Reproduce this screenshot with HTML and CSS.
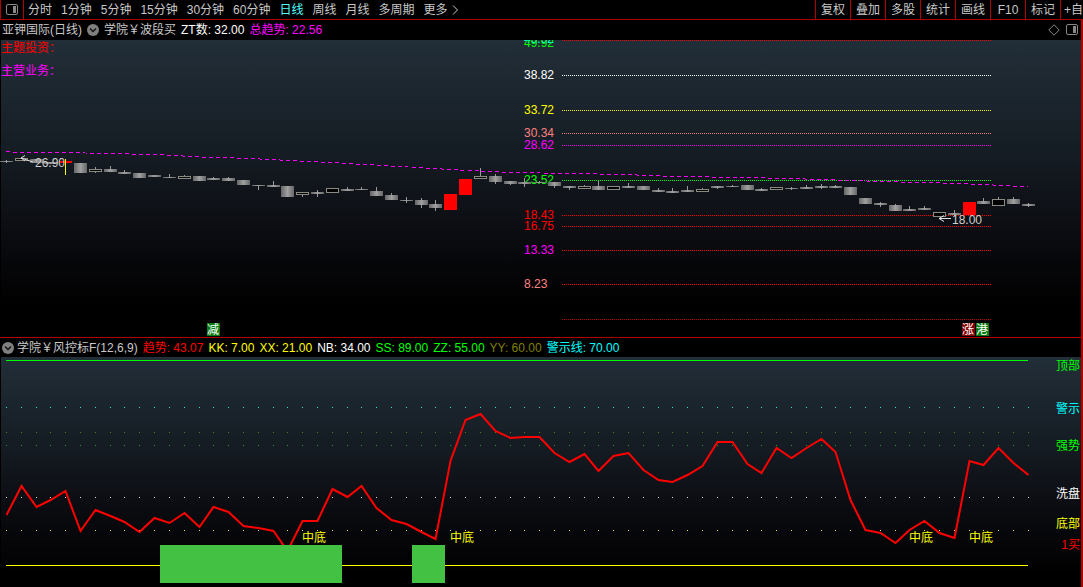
FILE: index.html
```html
<!DOCTYPE html>
<html lang="zh-CN">
<head>
    <meta charset="UTF-8">
    <meta name="viewport" content="width=device-width, initial-scale=1.0">
    <title>亚钾国际(日线)</title>
    <link rel="stylesheet" href="styles.css">
</head>
<body>
    <!-- Toolbar -->
    <header class="toolbar">
        <button class="layout-button" aria-label="布局">
            <svg width="12" height="12" viewBox="0 0 12 12"><rect x="0.5" y="0.5" width="11" height="10" rx="1.5" fill="none" stroke="#888"/><rect x="7" y="2" width="3" height="7" fill="#888"/></svg>
        </button>
        <nav class="periods">
            <button>分时</button>
            <button>1分钟</button>
            <button>5分钟</button>
            <button>15分钟</button>
            <button>30分钟</button>
            <button>60分钟</button>
            <button class="active">日线</button>
            <button>周线</button>
            <button>月线</button>
            <button>多周期</button>
            <button class="more">更多<svg width="7" height="10" viewBox="0 0 7 10"><path d="M1 0.5L5.5 5L1 9.5" fill="none" stroke="#c8c8c8"/></svg></button>
        </nav>
        <div class="tools">
            <button>复权</button>
            <button>叠加</button>
            <button>多股</button>
            <button>统计</button>
            <button>画线</button>
            <button>F10</button>
            <button>标记</button>
            <button class="cut">+自选</button>
        </div>
    </header>

    <main class="panels">
        <!-- Price chart -->
        <section>
            <div class="info info-main">
                <span>亚钾国际(日线)</span>
                <button class="fold" aria-label="展开"><svg width="12" height="12" viewBox="0 0 12 12"><circle cx="6" cy="6" r="6" fill="#808080"/><path d="M3 4.5L6 7.5L9 4.5" fill="none" stroke="#111" stroke-width="1.5"/></svg></button>
                <span>学院￥波段买</span>
                <span class="white">ZT数: 32.00</span>
                <span class="magenta">总趋势: 22.56</span>
                <div class="corner">
                    <svg width="12" height="12" viewBox="0 0 12 12"><path d="M6 0.8L11.2 6L6 11.2L0.8 6Z" fill="none" stroke="#888"/></svg>
                    <svg width="12" height="12" viewBox="0 0 12 12"><rect x="0.5" y="0.5" width="11" height="10" rx="1.5" fill="none" stroke="#888"/><rect x="7" y="2" width="3" height="7" fill="#888"/></svg>
                </div>
            </div>
            <svg id="priceChart" class="chart" viewBox="0 40 1081 297">
                <defs>
                    <linearGradient id="priceBg" x1="0" y1="0" x2="0" y2="1">
                        <stop offset="0" stop-color="#222e38"/>
                        <stop offset="0.35" stop-color="#161e25"/>
                        <stop offset="0.65" stop-color="#0b0c11"/>
                        <stop offset="0.9" stop-color="#000"/>
                    </linearGradient>
                    <linearGradient id="bar" x1="0" y1="0" x2="1" y2="0">
                        <stop offset="0" stop-color="#666"/>
                        <stop offset="0.5" stop-color="#a0a0a0"/>
                        <stop offset="1" stop-color="#666"/>
                    </linearGradient>
                </defs>
                <rect x="1" y="40" width="1080" height="297" fill="url(#priceBg)"/>
                <g id="levels"></g>
                <polyline class="average" points="6,151.5 15,152.5 85,153 130,154 165,155 200,157 250,158.5 270,159.5 330,162.5 400,166.5 450,169.5 500,172 540,173 575,173.5 625,174.5 660,176 790,178.5 850,180.5 900,182 940,183 985,184.5 1010,186 1028,186.5"/>
                <g id="candles"></g>
                <path d="M65.5 159V175" stroke="#ff0"/>
                <path d="M33 162L21 158M25 155.500L21 158L25 161" class="arrow"/>
                <text x="35" y="167" fill="#d0d0d0">26.90</text>
                <path d="M951 218.500H939M944 215.500L939 218.500L944 221.500" class="arrow"/>
                <text x="952" y="224" fill="#d0d0d0">18.00</text>
                <text x="1" y="52" fill="#f00">主题投资：</text>
                <text x="1" y="75" fill="#f0f">主营业务：</text>
                <g class="badge">
                    <rect x="207" y="323" width="13" height="13" fill="#087a10"/>
                    <text x="207" y="334">减</text>
                    <rect x="962" y="323" width="13" height="13" fill="#800000"/>
                    <text x="962" y="334">涨</text>
                    <rect x="976" y="323" width="13" height="13" fill="#087a10"/>
                    <text x="976" y="334">港</text>
                </g>
            </svg>
        </section>

        <!-- Indicator chart -->
        <section>
            <div class="info info-sub">
                <button class="fold" aria-label="展开"><svg width="12" height="12" viewBox="0 0 12 12"><circle cx="6" cy="6" r="6" fill="#808080"/><path d="M3 4.5L6 7.5L9 4.5" fill="none" stroke="#111" stroke-width="1.5"/></svg></button>
                <span>学院￥风控标F(12,6,9)</span>
                <span class="red">趋势: 43.07</span>
                <span class="yellow">KK: 7.00</span>
                <span class="yellow">XX: 21.00</span>
                <span class="white">NB: 34.00</span>
                <span class="green">SS: 89.00</span>
                <span class="green">ZZ: 55.00</span>
                <span class="olive">YY: 60.00</span>
                <span class="cyan">警示线: 70.00</span>
            </div>
            <svg id="trendChart" class="chart" viewBox="0 357 1081 230">
                <defs>
                    <linearGradient id="trendBg" x1="0" y1="0" x2="0" y2="1">
                        <stop offset="0" stop-color="#222e38"/>
                        <stop offset="0.35" stop-color="#161e25"/>
                        <stop offset="0.65" stop-color="#0b0c11"/>
                        <stop offset="0.95" stop-color="#000"/>
                    </linearGradient>
                </defs>
                <rect x="1" y="357" width="1080" height="230" fill="url(#trendBg)"/>
                <path d="M6 360.500H1028" stroke="#0f0"/>
                <g id="dots"></g>
                <path d="M6 565.500H1028" stroke="#ff0"/>
                <polyline id="trend" fill="none" stroke="#f00" stroke-width="2"/>
                <rect x="160" y="545" width="182" height="38" fill="#42c142"/>
                <rect x="412" y="545" width="33" height="38" fill="#42c142"/>
                <g fill="#ff0">
                    <text x="302" y="542">中底</text>
                    <text x="450" y="542">中底</text>
                    <text x="909" y="542">中底</text>
                    <text x="969" y="542">中底</text>
                </g>
                <g text-anchor="end">
                    <text x="1080" y="370" fill="#0f0">顶部</text>
                    <text x="1080" y="413" fill="#0ff">警示</text>
                    <text x="1080" y="450" fill="#0f0">强势</text>
                    <text x="1080" y="498" fill="#fff">洗盘</text>
                    <text x="1080" y="528" fill="#ff0">底部</text>
                    <text x="1080" y="549" fill="#f00">1买</text>
                </g>
            </svg>
        </section>
    </main>

    <script src="chart.js"></script>
</body>
</html>
```
FILE: styles.css
```css
* {
    box-sizing: border-box;
}
body {
    margin: 0;
    background: #000;
    color: #c8c8c8;
    font-family: "Liberation Sans", "Noto Sans CJK SC", sans-serif;
    font-size: 12px;
    line-height: 18px;
}
button {
    display: flex;
    align-items: center;
    margin: 0;
    padding: 0;
    border: 0;
    background: none;
    color: inherit;
    font: inherit;
    white-space: nowrap;
    cursor: pointer;
}
.toolbar {
    display: flex;
    height: 20px;
    border-bottom: 1px solid #b00000;
    overflow: hidden;
}
.layout-button {
    width: 24px;
    justify-content: center;
    border-left: 1px solid #b00000;
    border-right: 1px solid #b00000;
}
.periods {
    display: flex;
    gap: 9px;
    padding-left: 4px;
}
.periods .active {
    color: #50ffff;
}
.more {
    gap: 4px;
}
.tools {
    display: flex;
    margin-left: auto;
}
.tools button {
    width: 35px;
    justify-content: center;
    border-left: 1px solid #b00000;
}
.tools .cut {
    width: 23px;
    padding-left: 3px;
    justify-content: flex-start;
    overflow: hidden;
}
.panels {
    border-right: 2px solid #b00000;
}
.info {
    display: flex;
    align-items: center;
    gap: 5px;
    white-space: nowrap;
}
.info-main {
    height: 20px;
    padding-left: 2px;
}
.info-sub {
    height: 20px;
    padding-left: 2px;
    border-top: 1px solid #b00000;
}
.info-sub .fold {
    margin-right: -2px;
}
.corner {
    display: flex;
    gap: 6px;
    margin-left: auto;
    padding-right: 3px;
}
.white { color: #fff; }
.magenta { color: #f0f; }
.red { color: #f00; }
.yellow { color: #ff0; }
.green { color: #0f0; }
.olive { color: #808000; }
.cyan { color: #0ff; }

.chart {
    display: block;
    width: 100%;
}
.average {
    fill: none;
    stroke: #f0f;
    stroke-dasharray: 4 3;
    shape-rendering: crispEdges;
}
.arrow {
    fill: none;
    stroke: #e0e0e0;
}
.badge text {
    fill: #fff;
}
```
FILE: chart.js
```javascript
const NS = 'http://www.w3.org/2000/svg';
const STEP = 14.81;

function add(parent, tag, attrs, text) {
    const el = document.createElementNS(NS, tag);
    for (const key in attrs) {
        el.setAttribute(key, attrs[key]);
    }
    if (text) {
        el.textContent = text;
    }
    document.getElementById(parent).appendChild(el);
}

function barX(i) {
    return Math.round(6 + i * STEP);
}

// price, label baseline, line y, label color, line color
const levels = [
    ['49.92', 43, 40, '#0ff', '#f00'],
    ['49.92', 47, null, '#0f0', null],
    ['38.82', 79, 75, '#fff', '#fff'],
    ['33.72', 114, 110, '#ff0', '#ff0'],
    ['30.34', 137, 133, '#ff8080', '#ff8080'],
    ['28.62', 149, 145, '#f0f', '#f0f'],
    ['23.52', 184, 180, '#0f0', '#0f0'],
    ['18.43', 219, 215, '#f00', '#f00'],
    ['16.75', 230, 226, '#f00', '#f00'],
    ['13.33', 254, 250, '#f0f', '#f00'],
    ['8.23', 288, 284, '#ff8080', '#f00'],
    ['', 0, 319, null, '#c00000']
];
levels.forEach(([price, base, y, color, line]) => {
    if (price) {
        add('levels', 'text', { x: 524, y: base, fill: color }, price);
    }
    if (line) {
        add('levels', 'path', { d: `M562 ${y + 0.5}H992`, stroke: line, 'stroke-dasharray': '1 1' });
    }
});

// f = filled, h = hollow, r = red; body top, body bottom, wick top, wick bottom
const candles = [
    ['f', 161, 162, 160, 163], ['h', 158, 161, 158, 161], ['f', 159, 163, 159, 163], ['f', 162, 164, 162, 164],
    ['r', 161, 163, 161, 163], ['f', 163, 173, 163, 173], ['h', 169, 172, 167, 173], ['f', 169, 172, 166, 172],
    ['f', 172, 174, 170, 174], ['f', 173, 178, 173, 178], ['f', 175, 177, 175, 177], ['f', 177, 178, 174, 178],
    ['h', 176, 179, 175, 179], ['f', 176, 181, 176, 181], ['f', 178, 180, 177, 180], ['f', 178, 181, 177, 181],
    ['f', 180, 185, 180, 185], ['f', 185, 186, 185, 190], ['f', 185, 187, 181, 187], ['f', 186, 197, 186, 197],
    ['h', 192, 195, 192, 197], ['f', 192, 194, 190, 197], ['h', 188, 193, 188, 193], ['f', 189, 191, 187, 191],
    ['f', 189, 190, 187, 190], ['f', 191, 196, 187, 196], ['f', 195, 200, 193, 200], ['f', 200, 201, 197, 203],
    ['f', 200, 205, 198, 208], ['f', 204, 208, 200, 211], ['r', 194, 210, 194, 210], ['r', 179, 195, 179, 195],
    ['h', 176, 179, 168, 179], ['f', 176, 182, 174, 184], ['f', 181, 184, 181, 185], ['f', 182, 184, 178, 187],
    ['f', 182, 183, 181, 183], ['f', 182, 186, 182, 188], ['f', 186, 188, 186, 190], ['h', 186, 189, 185, 189],
    ['f', 186, 190, 181, 190], ['h', 186, 190, 186, 190], ['f', 186, 188, 183, 188], ['f', 186, 190, 186, 190],
    ['f', 190, 192, 188, 192], ['f', 191, 193, 188, 193], ['f', 190, 192, 186, 192], ['h', 189, 192, 188, 192],
    ['f', 186, 188, 186, 189], ['f', 186, 187, 185, 187], ['f', 185, 190, 185, 190], ['f', 189, 191, 188, 191],
    ['h', 187, 190, 187, 190], ['f', 188, 189, 187, 190], ['f', 187, 189, 185, 189], ['f', 186, 188, 184, 189],
    ['f', 186, 188, 185, 188], ['f', 187, 195, 187, 195], ['f', 198, 204, 198, 204], ['f', 203, 205, 202, 207],
    ['f', 205, 211, 204, 211], ['f', 209, 211, 206, 211], ['f', 208, 210, 206, 210], ['h', 212, 217, 212, 217],
    ['f', 213, 215, 210, 216], ['r', 202, 215, 202, 215], ['f', 201, 204, 198, 204], ['h', 199, 206, 197, 206],
    ['f', 199, 204, 197, 204], ['f', 204, 206, 203, 207]
];
candles.forEach(([type, top, bottom, high, low], i) => {
    const x = barX(i);
    add('candles', 'path', { d: `M${x + 0.5} ${high}V${low}`, stroke: '#999' });
    if (type === 'h') {
        add('candles', 'rect', { x: x - 5.5, y: top + 0.5, width: 12, height: bottom - top - 1, fill: '#000', stroke: '#8a8a80' });
    } else {
        add('candles', 'rect', { x: x - 6, y: top, width: 13, height: bottom - top, fill: type === 'r' ? '#f00' : 'url(#bar)' });
    }
});

// y position of the trend line at each bar
const trend = [
    515, 486, 507, 500, 491, 531, 510, 516, 522, 532, 518, 523, 513, 527, 507, 512, 526, 528, 531, 551,
    521, 521, 489, 497, 486, 508, 520, 524, 532, 539, 461, 420, 414, 431, 438, 437, 437, 453, 462, 454,
    471, 456, 453, 470, 480, 482, 475, 466, 442, 442, 464, 473, 448, 458, 448, 439, 452, 500, 530, 533,
    543, 530, 521, 533, 538, 461, 465, 448, 463, 475
];
document.getElementById('trend').setAttribute('points', trend.map((y, i) => `${barX(i) + 0.5},${y}`).join(' '));

const rows = [[407, '#40e0e0'], [432, '#707010'], [445, '#20a030'], [497, '#e0e0e0'], [530, '#e8e860']];
rows.forEach(([y, color]) => {
    trend.forEach((value, i) => {
        add('dots', 'rect', { x: barX(i), y: y, width: 1, height: 1, fill: color });
    });
});
```
